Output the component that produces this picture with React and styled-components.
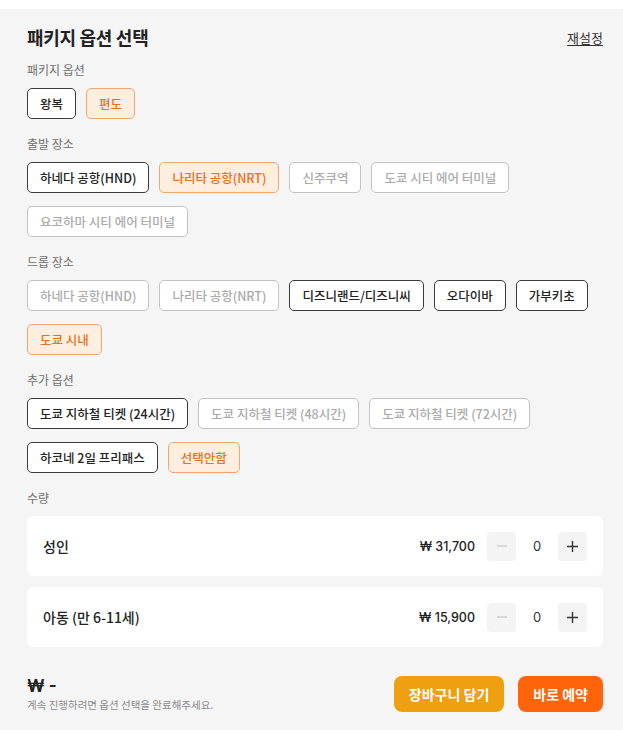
import { useState } from "react";
import styled, { createGlobalStyle } from "styled-components";

const GlobalStyle = createGlobalStyle`
    * {
        box-sizing: border-box;
    }

    body {
        margin: 0;
        background: #ffffff;
        font-family: "Noto Sans CJK KR", "Noto Sans", sans-serif;
        color: #222222;
    }
`

const Panel = styled.div`
    margin-top: 9px;
    min-height: 721px;
    background: #f5f5f5;
    padding: 16px 20px 16px 27px;
    display: flex;
    flex-direction: column;
`

const Header = styled.div`
    display: flex;
    justify-content: space-between;
    align-items: center;
    height: 24px;
    margin-bottom: 12px;

    h2 {
        margin: 0;
        font-size: 18px;
        font-weight: 600;
        letter-spacing: -0.3px;
    }
`

const ResetLink = styled.button`
    border: none;
    background: none;
    padding: 0;
    font-family: inherit;
    font-size: 13px;
    color: #333333;
    text-decoration: underline;
    text-underline-offset: 2px;
    cursor: pointer;
`

const Section = styled.div`
    display: flex;
    flex-direction: column;
    margin-bottom: 16px;
`

const Label = styled.div`
    font-size: 12px;
    line-height: 18px;
    color: #707070;
    margin-bottom: 9px;
`

const ChipList = styled.div`
    display: flex;
    flex-wrap: wrap;
    column-gap: 10px;
    row-gap: 13px;
`

const chipColors = {
    normal: { bg: "#ffffff", border: "#3a3a3a", text: "#222222" },
    active: { bg: "#fdeee0", border: "#f0a674", text: "#e8711d" },
    disabled: { bg: "#ffffff", border: "#c2c2c2", text: "#ababab" },
}

const Chip = styled.button`
    height: 31px;
    padding: 0 12px;
    border-radius: 5px;
    border: 1px solid ${({ $state }) => chipColors[$state].border};
    background: ${({ $state }) => chipColors[$state].bg};
    color: ${({ $state }) => chipColors[$state].text};
    font-family: inherit;
    font-size: 12.5px;
    font-weight: 500;
    white-space: nowrap;
    cursor: ${({ $state }) => ($state === "disabled" ? "default" : "pointer")};
`

const Cards = styled.div`
    display: flex;
    flex-direction: column;
    gap: 11px;
`

const Card = styled.div`
    height: 60px;
    background: #ffffff;
    border-radius: 6px;
    padding: 0 16px;
    display: flex;
    align-items: center;
    justify-content: space-between;
`

const CardName = styled.span`
    font-size: 14px;
    font-weight: 500;
    color: #222222;
`

const Stepper = styled.div`
    display: flex;
    align-items: center;
`

const Price = styled.span`
    font-family: "Inter", "Noto Sans CJK KR", sans-serif;
    font-size: 12.5px;
    font-weight: 500;
    color: #222222;
    margin-right: 12px;
`

const StepButton = styled.button`
    width: 29px;
    height: 29px;
    border: none;
    border-radius: 4px;
    background: #f4f4f4;
    color: ${({ $muted }) => ($muted ? "#c4c4c4" : "#333333")};
    display: flex;
    align-items: center;
    justify-content: center;
    padding: 0;
    cursor: pointer;
`

const Count = styled.span`
    width: 42px;
    text-align: center;
    font-family: "Inter", sans-serif;
    font-size: 13px;
    color: #333333;
`

const Footer = styled.div`
    margin-top: 12px;
    display: flex;
    justify-content: space-between;
    align-items: center;
`

const Total = styled.div`
    display: flex;
    flex-direction: column;

    strong {
        font-family: "Inter", "Noto Sans CJK KR", sans-serif;
        font-size: 17px;
        font-weight: 700;
        line-height: 22px;
        color: #222222;
    }

    span {
        font-size: 10.5px;
        line-height: 16px;
        color: #8a8a8a;
    }
`

const Actions = styled.div`
    display: flex;
    gap: 14px;
`

const ActionButton = styled.button`
    height: 36px;
    padding: 0 15px;
    border: none;
    border-radius: 8px;
    background: ${({ $primary }) => ($primary ? "#ff640a" : "#efa010")};
    color: #ffffff;
    font-family: inherit;
    font-size: 14px;
    font-weight: 700;
    cursor: pointer;
`

const sections = [
    {
        title: "패키지 옵션",
        items: [
            ["왕복", "normal"],
            ["편도", "active"],
        ],
    },
    {
        title: "출발 장소",
        items: [
            ["하네다 공항(HND)", "normal"],
            ["나리타 공항(NRT)", "active"],
            ["신주쿠역", "disabled"],
            ["도쿄 시티 에어 터미널", "disabled"],
            ["요코하마 시티 에어 터미널", "disabled"],
        ],
    },
    {
        title: "드롭 장소",
        items: [
            ["하네다 공항(HND)", "disabled"],
            ["나리타 공항(NRT)", "disabled"],
            ["디즈니랜드/디즈니씨", "normal"],
            ["오다이바", "normal"],
            ["가부키초", "normal"],
            ["도쿄 시내", "active"],
        ],
    },
    {
        title: "추가 옵션",
        items: [
            ["도쿄 지하철 티켓 (24시간)", "normal"],
            ["도쿄 지하철 티켓 (48시간)", "disabled"],
            ["도쿄 지하철 티켓 (72시간)", "disabled"],
            ["하코네 2일 프리패스", "normal"],
            ["선택안함", "active"],
        ],
    },
]

const MinusIcon = () => (
    <svg width="12" height="12" viewBox="0 0 12 12">
        <path d="M1 6h10" stroke="currentColor" strokeWidth="1.2" />
    </svg>
)

const PlusIcon = () => (
    <svg width="13" height="13" viewBox="0 0 13 13">
        <path d="M1 6.5h11M6.5 1v11" stroke="currentColor" strokeWidth="1.4" />
    </svg>
)

const App = () => {

    const [counts, setCounts] = useState({ adult: 0, child: 0 })

    const tickets = [
        { key: "adult", name: "성인", price: "₩ 31,700" },
        { key: "child", name: "아동 (만 6-11세)", price: "₩ 15,900" },
    ]

    const change = (key, diff) => {
        setCounts((prev) => ({ ...prev, [key]: Math.max(0, prev[key] + diff) }))
    }

    return (
        <>
            <GlobalStyle />
            <Panel>
                <Header>
                    <h2>패키지 옵션 선택</h2>
                    <ResetLink onClick={() => setCounts({ adult: 0, child: 0 })}>재설정</ResetLink>
                </Header>
                {sections.map((section) => (
                    <Section key={section.title}>
                        <Label>{section.title}</Label>
                        <ChipList>
                            {section.items.map(([text, state]) => (
                                <Chip key={text} $state={state}>{text}</Chip>
                            ))}
                        </ChipList>
                    </Section>
                ))}
                <Section>
                    <Label>수량</Label>
                    <Cards>
                        {tickets.map((t) => (
                            <Card key={t.key}>
                                <CardName>{t.name}</CardName>
                                <Stepper>
                                    <Price>{t.price}</Price>
                                    <StepButton $muted={counts[t.key] === 0} onClick={() => change(t.key, -1)}>
                                        <MinusIcon />
                                    </StepButton>
                                    <Count>{counts[t.key]}</Count>
                                    <StepButton onClick={() => change(t.key, 1)}>
                                        <PlusIcon />
                                    </StepButton>
                                </Stepper>
                            </Card>
                        ))}
                    </Cards>
                </Section>
                <Footer>
                    <Total>
                        <strong>₩ -</strong>
                        <span>계속 진행하려면 옵션 선택을 완료해주세요.</span>
                    </Total>
                    <Actions>
                        <ActionButton>장바구니 담기</ActionButton>
                        <ActionButton $primary>바로 예약</ActionButton>
                    </Actions>
                </Footer>
            </Panel>
        </>
    )
}

export default App;
